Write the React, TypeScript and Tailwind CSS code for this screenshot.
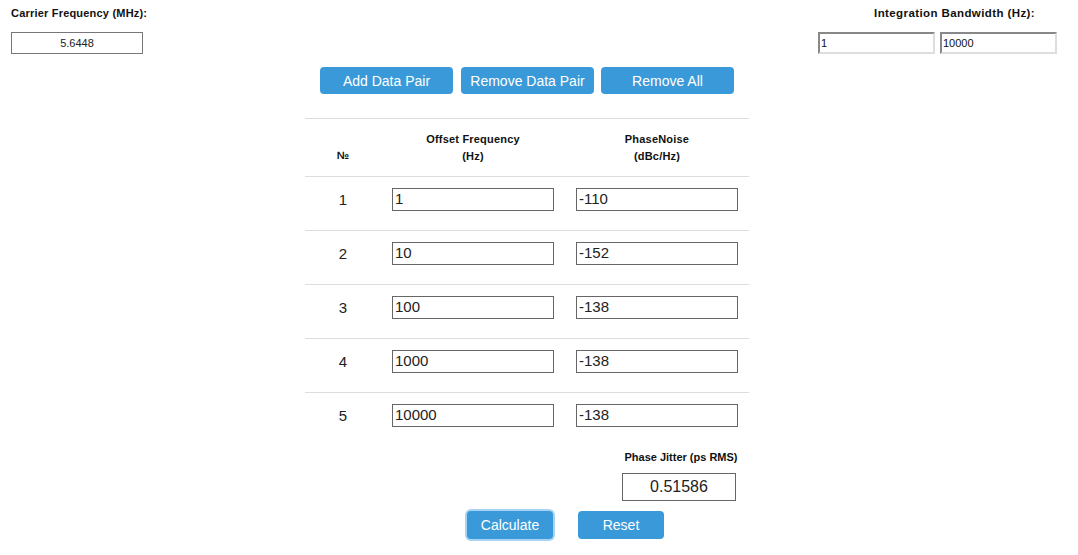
import React from "react";

const rows = [
  ["1", "1", "-110"],
  ["2", "10", "-152"],
  ["3", "100", "-138"],
  ["4", "1000", "-138"],
  ["5", "10000", "-138"],
];

export default function App() {
  return (
    <div
      className="w-[1078px] h-[555px] bg-white text-[#222] overflow-hidden"
      style={{ fontFamily: '"Liberation Sans", Arial, sans-serif' }}
    >
      <div className="flex justify-between pl-[11px] pr-[21px] pt-[6px]">
        <div className="flex flex-col">
          <div className="text-[11px] font-bold leading-[14px] h-[26px] tracking-[0.2px] text-[#111]">Carrier Frequency (MHz):</div>
          <div className="w-[132px] h-[22px] border border-[#777] flex items-center justify-center text-[11px] text-[#222]">
            5.6448
          </div>
        </div>
        <div className="flex flex-col">
          <div className="text-[11.5px] font-bold leading-[14px] h-[26px] tracking-[0.4px] text-right pr-[22px] text-[#111]">
            Integration Bandwidth (Hz):
          </div>
          <div className="flex gap-[5px]">
            <div className="w-[117px] h-[22px] border-2 border-t-[#888] border-l-[#888] border-r-[#ddd] border-b-[#ddd] flex items-center pl-[1px] text-[11px] text-[#111]">
              1
            </div>
            <div className="w-[117px] h-[22px] border-2 border-t-[#888] border-l-[#888] border-r-[#ddd] border-b-[#ddd] flex items-center pl-[1px] text-[11px] text-[#111]">
              10000
            </div>
          </div>
        </div>
      </div>

      <div className="flex justify-center pr-[24px] mt-[13px]">
        <div className="w-[444px] flex flex-col">
          <div className="flex pl-[15px] gap-[8px]">
            <button className="w-[133px] h-[27px] pt-[2px] rounded-[4px] bg-[#3a9ad9] text-white text-[14px]">Add Data Pair</button>
            <button className="w-[133px] h-[27px] pt-[2px] rounded-[4px] bg-[#3a9ad9] text-white text-[14px]">Remove Data Pair</button>
            <button className="w-[133px] h-[27px] pt-[2px] rounded-[4px] bg-[#3a9ad9] text-white text-[14px] -ml-[1px]">Remove All</button>
          </div>

          <div className="mt-[24px] border-t border-[#ddd] grid grid-cols-[76px_184px_184px]">
            <div className="h-[57px] flex items-end justify-center pb-[12px] text-[11px] font-bold text-[#111] leading-[17px]">№</div>
            <div className="h-[57px] flex flex-col items-center pt-[12px] text-[11px] font-bold tracking-[0.2px] text-[#111] leading-[17px]">
              <span>Offset Frequency</span>
              <span>(Hz)</span>
            </div>
            <div className="h-[57px] flex flex-col items-center pt-[12px] text-[11px] font-bold tracking-[0.2px] text-[#111] leading-[17px]">
              <span>PhaseNoise</span>
              <span>(dBc/Hz)</span>
            </div>
            {rows.map((r, i) => (
              <React.Fragment key={i}>
                <div className="h-[54px] border-t border-[#ddd] flex justify-center pt-[14px] text-[15px] text-[#222] leading-[17px]">
                  {r[0]}
                </div>
                <div className="h-[54px] border-t border-[#ddd] flex justify-center pt-[11px]">
                  <div className="w-[162px] h-[23px] border border-[#666] flex items-center pl-[2px] text-[15px] text-[#222]">{r[1]}</div>
                </div>
                <div className="h-[54px] border-t border-[#ddd] flex justify-start pl-[11px] pt-[11px]">
                  <div className="w-[162px] h-[23px] border border-[#666] flex items-center pl-[2px] text-[15px] text-[#222]">{r[2]}</div>
                </div>
              </React.Fragment>
            ))}
          </div>

          <div className="flex flex-col pl-[317px] mt-[4px]">
            <div className="w-[118px] text-center text-[11px] font-bold text-[#111] leading-[14px]">Phase Jitter (ps RMS)</div>
            <div className="w-[114px] h-[28px] mt-[9px] border border-[#666] flex items-center justify-center text-[16px] text-[#222]">
              0.51586
            </div>
          </div>

          <div className="flex pl-[162px] gap-[25px] mt-[10px]">
            <button className="w-[86px] h-[28px] pt-[1px] rounded-[4px] bg-[#3a9ad9] text-white text-[14px] shadow-[0_0_0_2px_#a9d3f2]">Calculate</button>
            <button className="w-[86px] h-[28px] pt-[1px] rounded-[4px] bg-[#3a9ad9] text-white text-[14px]">Reset</button>
          </div>
        </div>
      </div>
    </div>
  );
}
